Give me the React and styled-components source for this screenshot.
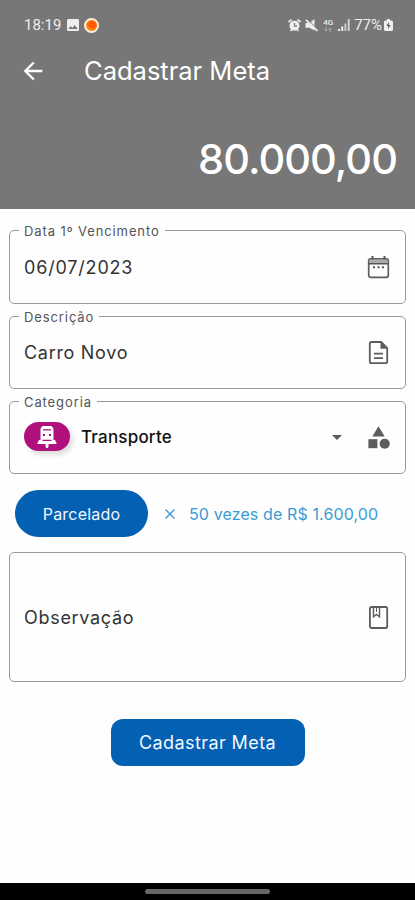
import React from "react";
import styled, { createGlobalStyle } from "styled-components";
import { MdArrowBack, MdArrowDropDown, MdCategory, MdImage } from "react-icons/md";

const BusIcon = () => (
  <svg width="20" height="22" viewBox="0 0 20 22">
    <path
      fill="#fff"
      d="M5.500 0h9l2 2.500V14H18l1.500 3v1h-8v2.500L10.700 22H9.300l-.8-1.500V18h-8v-1L2 14h1.500V2.500z"
    />
    <path stroke="#b0107c" strokeWidth="1.300" d="M6 3.900h8M5.500 14.300h9" />
    <path fill="#b0107c" d="M6 8h2v2H6zM12 8h2v2h-2z" />
  </svg>
);

const CalendarIcon = () => (
  <svg width="27" height="27" viewBox="0 0 27 27">
    <rect x="3.700" y="4.800" width="19.600" height="18.500" rx="2" fill="none" stroke="#5c5c5c" strokeWidth="1.700" />
    <path fill="#aaa" d="M4.500 5.500h18v3.500h-18z" />
    <path fill="#555" d="M6.500 2h2v3.500h-2zM18.500 2h2v3.500h-2zM4 9h19v1.500H4z" />
    <path fill="#555" d="M8 12.300h2v1.900H8zM12.500 12.300h2v1.900h-2zM17 12.300h2v1.900h-2z" />
  </svg>
);

const DocumentIcon = () => (
  <svg width="27" height="27" viewBox="0 0 27 27" fill="none" stroke="#5c5c5c" strokeWidth="1.800">
    <path d="M6.500 3h9.700l6 6v13.500q0 1.700-1.700 1.700h-14q-1.700 0-1.700-1.700V4.700Q4.800 3 6.500 3z" />
    <path d="M15.500 3v6.800h6.700z" fill="#5c5c5c" stroke="none" />
    <path d="M9 14.600h9M9 19.200h9" strokeWidth="1.700" />
  </svg>
);

const BookIcon = () => (
  <svg width="27" height="27" viewBox="0 0 27 27" fill="none" stroke="#5c5c5c">
    <rect x="4.900" y="3" width="17.300" height="21" rx="1.700" strokeWidth="1.800" />
    <path d="M8.500 3.500v9.300l3-2.300 3 2.300V3.500" strokeWidth="1.400" />
    <path d="M11.500 3.500v4.500" strokeWidth="1" />
  </svg>
);

const AlarmIcon = () => (
  <svg width="13" height="13" viewBox="0 0 13 13">
    <path d="M.5 3L3.500.8M12.500 3L9.500.8M2.500 12l1.500-1.500M10.500 12L9 10.500" stroke="#eee" strokeWidth="1.700" />
    <circle cx="6.500" cy="6.800" r="5" fill="#eee" />
    <path d="M6.500 4v3.200h2.500" fill="none" stroke="#777" strokeWidth="1.200" />
  </svg>
);

const MuteIcon = () => (
  <svg width="13" height="13" viewBox="0 0 13 13">
    <path fill="#eee" d="M.5 4h4L9.500 0v11.500L4.500 8.800h-4z" />
    <path d="M2.500.5l10.500 10" stroke="#777" strokeWidth="1" />
    <path d="M1 .8l11.500 11.200" stroke="#eee" strokeWidth="1.700" />
  </svg>
);

const ArrowsIcon = () => (
  <svg width="8" height="5" viewBox="0 0 8 5" fill="none" stroke="#aaa">
    <path d="M2 0v4M.5 2.500L2 4l1.500-1.500M6 5V1M4.500 2.500L6 1l1.500 1.500" />
  </svg>
);

const SignalIcon = () => (
  <svg width="12" height="12" viewBox="0 0 12 12" fill="#eee">
    <path d="M0 10h2v2H0zM3.200 7.500h2V12h-2z" />
    <path d="M6.400 4.500h2V12h-2z" opacity=".7" />
    <path d="M9.800 0h1.800v12H9.800z" opacity=".8" />
  </svg>
);

const BatteryIcon = () => (
  <svg width="9" height="12" viewBox="0 0 9 12">
    <path fill="#eee" d="M3 0h3v1.500h1.500Q9 1.500 9 3v7.500Q9 12 7.500 12h-6Q0 12 0 10.500V3q0-1.500 1.500-1.500H3z" />
    <path fill="#666" d="M5 3L2.300 7h1.800v3L6.700 6H5z" />
  </svg>
);

const App = () => {
  return (
    <Screen>
      <GlobalStyle />
      <Header>
        <StatusBar>
          <StatusGroup $gap="4px">
            <Clock>18:19</Clock>
            <MdImage size={16} />
            <AppDot />
          </StatusGroup>
          <StatusGroup $gap="4px">
            <AlarmIcon />
            <MuteIcon />
            <Network>
              <span>4G</span>
              <ArrowsIcon />
            </Network>
            <SignalIcon />
            <Battery>
              77%
              <BatteryIcon />
            </Battery>
          </StatusGroup>
        </StatusBar>
        <TitleRow>
          <MdArrowBack size={28} />
          <Title>Cadastrar Meta</Title>
        </TitleRow>
        <Amount>80.000,00</Amount>
      </Header>

      <Form>
        <Field $height={74}>
          <Label>Data 1º Vencimento</Label>
          <FieldRow>
            <Value $spacing="0.82px">06/07/2023</Value>
            <CalendarIcon />
          </FieldRow>
        </Field>
        <Field $height={73}>
          <Label>Descrição</Label>
          <FieldRow>
            <Value>Carro Novo</Value>
            <DocumentIcon />
          </FieldRow>
        </Field>
        <Field $height={73}>
          <Label>Categoria</Label>
          <FieldRow>
            <Picked>
              <Pill>
                <BusIcon />
              </Pill>
              <Category>Transporte</Category>
              <Caret size={24} />
            </Picked>
            <MdCategory size={27} />
          </FieldRow>
        </Field>

        <Installments>
          <Chip>Parcelado</Chip>
          <Times>
            <svg width="10" height="10" viewBox="0 0 10 10" stroke="#3a9bd4" strokeWidth="1.4">
              <path d="M.5.5l9 9M9.500.5l-9 9" />
            </svg>
            <span>50 vezes de R$ 1.600,00</span>
          </Times>
        </Installments>

        <Field $height={130}>
          <FieldRow>
            <Value>Observação</Value>
            <BookIcon />
          </FieldRow>
        </Field>

        <Submit>Cadastrar Meta</Submit>
      </Form>

      <NavBar>
        <NavHandle />
      </NavBar>
    </Screen>
  );
};

const GlobalStyle = createGlobalStyle`
  * {
    box-sizing: border-box;
  }

  body {
    margin: 0;
    background: #fff;
  }

  svg {
    display: block;
    flex-shrink: 0;
  }
`;

const Screen = styled.div`
  width: 415px;
  height: 900px;
  display: flex;
  flex-direction: column;
  overflow: hidden;
  background: #fefefe;
  font-family: Inter, "Liberation Sans", sans-serif;
`;

const Header = styled.header`
  height: 209px;
  flex-shrink: 0;
  background: #777;
  color: #fff;
`;

const StatusBar = styled.div`
  display: flex;
  justify-content: space-between;
  align-items: center;
  height: 50px;
  padding: 0 22px 0 24px;
  color: #eee;
  font-family: Roboto, sans-serif;
`;

const StatusGroup = styled.div`
  display: flex;
  align-items: center;
  gap: ${(props) => props.$gap};
`;

const Clock = styled.span`
  font-size: 15px;
`;

const AppDot = styled.span`
  width: 15px;
  height: 15px;
  margin-left: -1px;
  border: 2px solid #fff0e4;
  border-radius: 50%;
  background: radial-gradient(circle at 60% 40%, #ff5a00 30%, #ff9a20 80%);
`;

const Network = styled.span`
  display: flex;
  flex-direction: column;
  align-items: center;
  gap: 1px;
  width: 12px;
  font-size: 8px;
  line-height: 7px;
  font-weight: 500;
`;

const Battery = styled.span`
  display: flex;
  align-items: center;
  gap: 2px;
  font-size: 15px;
`;

const TitleRow = styled.div`
  display: flex;
  align-items: center;
  height: 42px;
  padding-left: 19px;
  gap: 37px;
`;

const Title = styled.h1`
  margin: 0;
  padding-bottom: 2px;
  font-size: 25.5px;
  font-weight: 400;
`;

const Amount = styled.div`
  padding: 40px 18px 0 0;
  font-size: 41.5px;
  line-height: 54px;
  font-weight: 500;
  letter-spacing: -0.95px;
  text-align: right;
`;

const Form = styled.main`
  flex: 1;
  display: flex;
  flex-direction: column;
  padding: 21px 9px 0;
`;

const FieldRow = styled.div`
  display: flex;
  align-items: center;
  padding: 0 13px 0 5px;
`;

const Field = styled.fieldset`
  height: ${(props) => props.$height}px;
  min-width: 0;
  margin: 0 0 12px;
  padding: 0 0 0 9px;
  border: 1px solid #999;
  border-radius: 5px;
  color: #5c5c5c;

  ${FieldRow} {
    height: ${(props) => props.$height - 2}px;
  }
`;

/* one pixel tall so that the border runs along the very top of the field */
const Label = styled.legend`
  height: 1px;
  padding: 0 5px;
  color: #555;
  font-size: 13px;
  line-height: 2px;
  letter-spacing: 0.9px;
  white-space: nowrap;
`;

const Value = styled.span`
  flex: 1;
  color: #333;
  font-size: 18px;
  letter-spacing: ${(props) => props.$spacing || "0.7px"};
`;

const Picked = styled.div`
  flex: 1;
  display: flex;
  align-items: center;
  padding-bottom: 2px;
`;

const Pill = styled.span`
  display: flex;
  align-items: center;
  justify-content: center;
  width: 46px;
  height: 29px;
  border-radius: 15px;
  background: #b0107c;
  box-shadow: 3px 4px 5px rgba(0, 0, 0, 0.13);
`;

const Category = styled.span`
  flex: 1;
  margin-left: 11px;
  color: #111;
  font-size: 17px;
  font-weight: 500;
  letter-spacing: 0.2px;
`;

const Caret = styled(MdArrowDropDown)`
  margin-right: 16px;
`;

const Installments = styled.div`
  display: flex;
  align-items: center;
  margin: 4px 0 15px;
  padding-left: 6px;
`;

const Chip = styled.button`
  width: 133px;
  height: 47px;
  border: none;
  border-radius: 24px;
  background: #0460b3;
  color: #f3f8ff;
  font-family: inherit;
  font-size: 16px;
  letter-spacing: 0.2px;
`;

const Times = styled.div`
  display: flex;
  align-items: center;
  gap: 14px;
  margin-left: 17px;
  color: #3a9bd4;
  font-size: 16px;
  letter-spacing: 0.12px;
`;

const Submit = styled.button`
  align-self: center;
  width: 194px;
  height: 47px;
  margin-top: 25px;
  border: none;
  border-radius: 12px;
  background: #0460b3;
  color: #f3f8ff;
  font-family: inherit;
  font-size: 18px;
  letter-spacing: 0.42px;
`;

const NavBar = styled.footer`
  display: flex;
  justify-content: center;
  height: 17px;
  flex-shrink: 0;
  padding-top: 6px;
  background: #000;
`;

const NavHandle = styled.span`
  width: 125px;
  height: 5px;
  border-radius: 3px;
  background: #686868;
`;

export default App;
